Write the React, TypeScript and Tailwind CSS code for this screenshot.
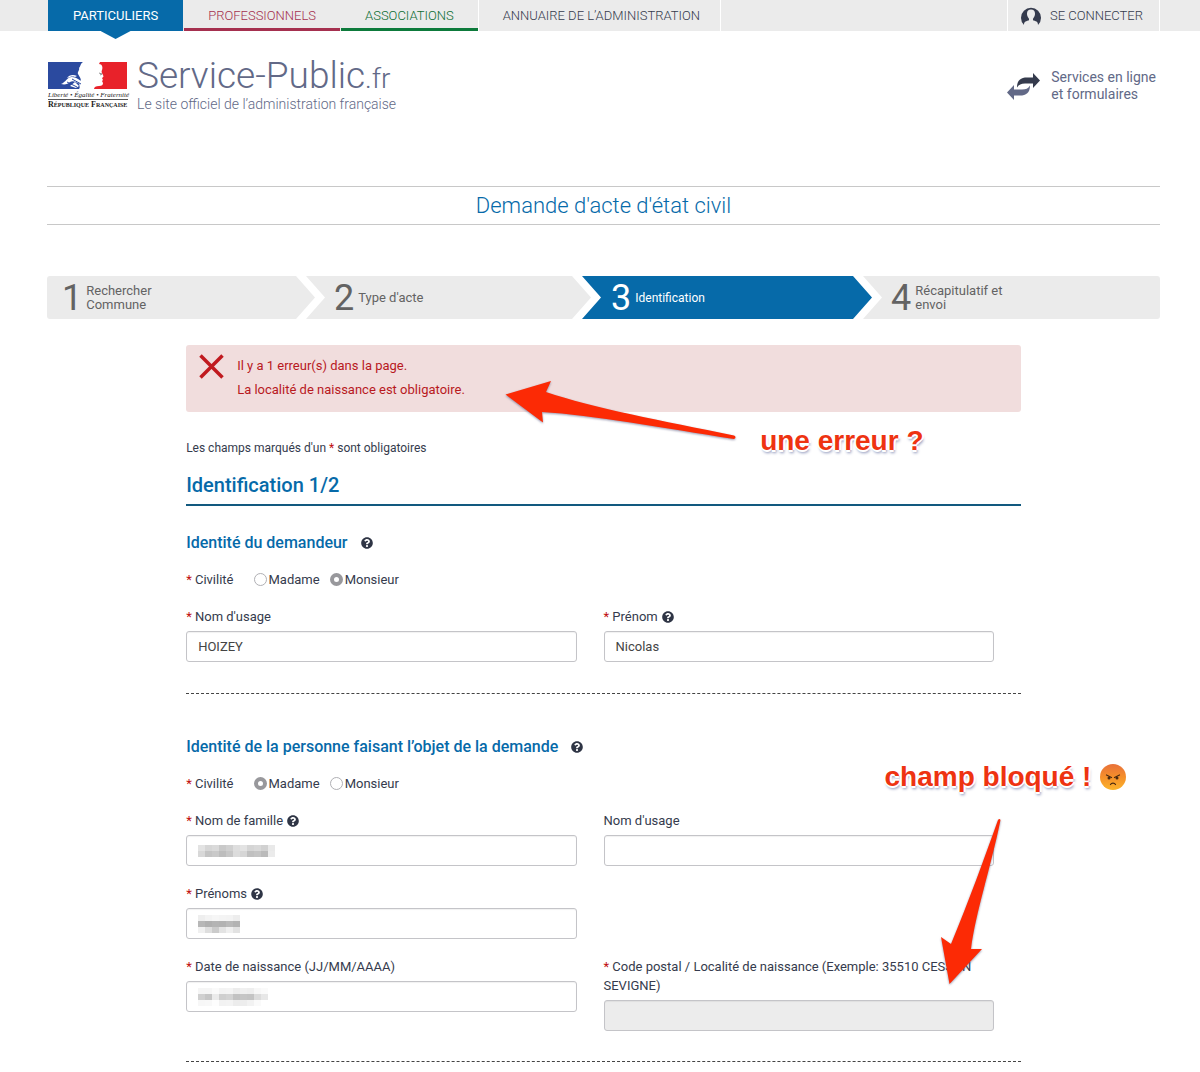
import React from 'react';
import { FaQuestionCircle } from 'react-icons/fa';

function RepublicLogo() {
  return (
    <div className="w-20 shrink-0 pt-1 font-['Liberation_Serif',serif] text-[#222]">
      <svg viewBox="0 0 79 27" className="block h-[27px] w-[79px]" aria-hidden="true">
        <path d="M0 0H35C32 2 33 4 31 6C32 8 29 10 30 12C32 16 34 17 32 20C30 23 33 25 31 27H0Z" fill="#2b4a9f" />
        <path d="M52 0H79V27H46C46 25 48 24 51 24C54 24 55 23 55 21L54 19L55 18L54 16C55 15 56 15 55 13C54 11 53 10 54 8C55 5 54 2 51 2Z" fill="#e8222a" />
        <path d="M13 22C18 20 19 15 24 15C28 15 31 18 35 20L32 22C28 20 25 18 22 20C20 22 17 23 13 22ZM19 16C21 13 25 12 29 14L27 15C24 14 22 15 19 16ZM22 24L27 20L31 24L28 26Z" fill="#fff" />
        <path d="M24 17L33 22M19 20L29 25" stroke="#2b4a9f" strokeWidth="1" />
        <path d="M51 11L54 12L52 13" stroke="#777" strokeWidth=".8" fill="none" />
      </svg>
      <p className="mt-0.5 whitespace-nowrap text-[7px] leading-2 italic">Liberté • Égalité • Fraternité</p>
      <p className="border-t border-[#555] whitespace-nowrap text-[8px] leading-[10px] font-bold [font-variant:small-caps]">République Française</p>
    </div>
  );
}

function UserIcon() {
  return (
    <svg viewBox="0 0 20 18" className="h-[18px] w-5" aria-hidden="true">
      <path d="M3 18A10 10 0 1 1 17 18C17 15 16 14.500 12.500 13.500C11.800 13.200 11.800 12 12.300 11.300C13.700 9.500 14 8 14 6.500C14 4 12.500 2.500 10 2.500S6 4 6 6.500C6 8 6.300 9.500 7.700 11.300C8.200 12 8.200 13.200 7.500 13.500C4 14.500 3 15 3 18Z" fill="#353b4d" />
    </svg>
  );
}

function SwapIcon() {
  return (
    <svg viewBox="0 0 33 27" className="h-[27px] w-[33px]" aria-hidden="true">
      <path d="M10 14.500C10 7 14 4.500 20 4.500H26V0L33 7.500L26 15V10.500H18C14 10.500 12 11.500 10 14.500Z" fill="#353b4d" />
      <path d="M23 12.500C23 20 19 22.500 13 22.500H7V27L0 19.500L7 12V16.500H15C19 16.500 21 15.500 23 12.500Z" fill="#626987" />
    </svg>
  );
}

function AngryFace() {
  return (
    <svg viewBox="0 0 28 28" className="h-7 w-7" role="img" aria-label="Visage en colère">
      <defs>
        <linearGradient id="angry" x1="0" y1="0" x2="0" y2="1">
          <stop offset="0" stopColor="#e8713a" />
          <stop offset=".5" stopColor="#f58f2a" />
          <stop offset="1" stopColor="#fbb42c" />
        </linearGradient>
      </defs>
      <circle cx="14" cy="14" r="13" fill="url(#angry)" />
      <path d="M7.500 12L12.500 14.500M20.500 12L15.500 14.500" stroke="#4b2a10" strokeWidth="1.200" strokeLinecap="round" />
      <circle cx="10" cy="15" r="1.500" fill="#4b2a10" />
      <circle cx="18" cy="15" r="1.500" fill="#4b2a10" />
      <path d="M11.500 21.500C12.500 19.800 15.500 19.800 16.500 21.500" stroke="#4b2a10" strokeWidth="1.200" fill="none" strokeLinecap="round" />
    </svg>
  );
}

function Help({ small = false }: { small?: boolean }) {
  return (
    <button type="button" aria-label="Aide" className={small ? 'ml-1 text-[#2f3545]' : 'ml-[13px] text-[#2f3545]'}>
      <FaQuestionCircle className="h-3 w-3" />
    </button>
  );
}

const Star = () => <span className="text-[#c00d0d]">* </span>;

/* Masked values: rows of grey cells, 7px wide by 6px high. */
function Mosaic({ rows }: { rows: string[][] }) {
  return (
    <div className="pointer-events-none absolute inset-y-0 left-3 flex items-center">
      <svg width="77" height={rows.length * 6} aria-hidden="true">
        {rows.map((row, y) => row.map((fill, x) => <rect key={`${x}-${y}`} x={x * 7} y={y * 6} width="7" height="6" fill={fill} />))}
      </svg>
    </div>
  );
}

const familyCells = [
  ['#e3e3e3', '#d6d6d6', '#dadada', '#c9c9c9', '#d0d0d0', '#dedede', '#e3e3e3', '#d5d5d5', '#d9d9d9', '#d1d1d1', '#e9e9e9'],
  ['#d8d8d8', '#c4c4c4', '#c9c9c9', '#bdbdbd', '#c7c7c7', '#dcdcdc', '#d6d6d6', '#c0c0c0', '#c4c4c4', '#bababa', '#ebebeb'],
];
const nameCells = [
  ['#eee', '#f3f3f3', '#f6f6f6', '#f4f4f4', '#f3f3f3', '#ededed'],
  ['#b7b7b7', '#b0b0b0', '#b4b4b4', '#b2b2b2', '#b9b9b9', '#b3b3b3'],
  ['#f0f0f0', '#dedede', '#cbcbcb', '#e3e3e3', '#efefef', '#e2e2e2'],
];
const dateCells = [
  ['#f5f5f5', '#f5f5f5', '#fafafa', '#f3f3f3', '#f4f4f4', '#ececec', '#f0f0f0', '#eee', '#f7f7f7', '#fafafa'],
  ['#d0d0d0', '#c6c6c6', '#ebebeb', '#cfcfcf', '#d3d3d3', '#c2c2c2', '#c6c6c6', '#c4c4c4', '#dcdcdc', '#e7e7e7'],
  ['#f7f7f7', '#f8f8f8', '#fdfdfd', '#f2f2f2', '#f3f3f3', '#ececec', '#ededed', '#f2f2f2', '#fafafa', '#fff'],
];

interface FieldProps {
  id: string;
  label: React.ReactNode;
  required?: boolean;
  help?: boolean;
  value?: string;
  disabled?: boolean;
  cells?: string[][];
  children?: React.ReactNode;
}

function Field({ id, label, required, help, value, disabled, cells, children }: FieldProps) {
  return (
    <div className="relative pr-[27px]">
      <div className="mb-[5px] flex items-center leading-[19px]">
        <label htmlFor={id}>
          {required && <Star />}
          {label}
        </label>
        {help && <Help small />}
      </div>
      <div className="relative">
        <input
          id={id}
          type="text"
          defaultValue={value}
          disabled={disabled}
          className="block h-[31px] w-full rounded-[3px] border border-[#c4c4c8] bg-white px-[11px] text-[13px] text-[#444] shadow-[inset_0_1px_1px_rgba(0,0,0,0.06)] disabled:bg-[#ececec]"
        />
        {cells && <Mosaic rows={cells} />}
      </div>
      {children}
    </div>
  );
}

function Civility({ name, selected }: { name: string; selected: string }) {
  return (
    <fieldset className="mt-4 flex items-center leading-[19px]">
      <legend className="float-left mr-5">
        <Star />
        Civilité
      </legend>
      {['Madame', 'Monsieur'].map((option) => (
        <label key={option} className="mr-[10px] flex items-center gap-0.5">
          <input
            type="radio"
            name={name}
            defaultChecked={option === selected}
            className="h-[13px] w-[13px] appearance-none rounded-full border border-[#b0b0b4] bg-white checked:border-[4px] checked:border-[#98989c]"
          />
          {option}
        </label>
      ))}
    </fieldset>
  );
}

const sticker =
  'absolute whitespace-nowrap font-["Liberation_Sans",sans-serif] text-[28px] leading-8 font-bold text-[#ee3311] [text-shadow:-2px_0_#fff,2px_0_#fff,0_-2px_#fff,0_2px_#fff,1px_3px_3px_#8a93b8]';

const steps = [
  { label: 'Rechercher Commune' },
  { label: "Type d'acte" },
  { label: 'Identification' },
  { label: 'Récapitulatif et envoi' },
];
const stepShapes = [
  'mr-[10px] rounded-l-[3px] pl-[15px] bg-[#ebebeb] text-[#636363] [clip-path:polygon(0_0,calc(100%-19px)_0,100%_50%,calc(100%-19px)_100%,0_100%)]',
  '-ml-[19px] mr-[10px] pl-7 bg-[#ebebeb] text-[#636363] [clip-path:polygon(0_0,calc(100%-19px)_0,100%_50%,calc(100%-19px)_100%,0_100%,19px_50%)]',
  '-ml-[19px] mr-[10px] pl-[29px] bg-[#066aa9] text-xs text-white [clip-path:polygon(0_0,calc(100%-19px)_0,100%_50%,calc(100%-19px)_100%,0_100%,19px_50%)]',
  '-ml-[19px] rounded-r-[3px] pl-7 bg-[#ebebeb] text-[#636363] [clip-path:polygon(0_0,100%_0,100%_100%,0_100%,19px_50%)]',
];

export default function App() {
  return (
    <div className="overflow-x-hidden bg-white font-[Roboto,sans-serif] text-[13px] text-[#353b4d]">
      <header>
        <div className="bg-[#ebebeb] pr-10 pl-12">
          <nav className="flex h-[31px] items-stretch text-[13px] leading-[31px]">
            <a href="#particuliers" className="relative mr-px bg-[#066aa9] px-[25px] text-white">
              PARTICULIERS
              <span className="absolute top-full left-1/2 h-2 w-[30px] -translate-x-1/2 bg-[#066aa9] [clip-path:polygon(0_0,100%_0,50%_100%)]" />
            </a>
            <a href="#professionnels" className="mr-px border-b-[3px] border-[#a5304f] px-6 font-light text-[#a5304f]">PROFESSIONNELS</a>
            <a href="#associations" className="border-b-[3px] border-[#0d7a3b] px-6 font-light text-[#0d6e33]">ASSOCIATIONS</a>
            <a href="#annuaire" className="border-x border-white pr-5 pl-6 font-light">ANNUAIRE DE L’ADMINISTRATION</a>
            <a href="#connexion" className="ml-auto flex items-center gap-[9px] border-x border-white pr-4 pl-[13px] font-light">
              <UserIcon />
              SE CONNECTER
            </a>
          </nav>
        </div>
        <div className="flex items-start justify-between pt-[27px] pr-11 pl-12">
          <a href="#accueil" className="flex gap-[9px]">
            <RepublicLogo />
            <div className="pt-px text-[#626987]">
              <p className="text-[37px] leading-[34px] font-light">
                Service-Public<span className="text-[28px]">.fr</span>
              </p>
              <p className="text-sm leading-4 font-light">Le site officiel de l’administration française</p>
            </div>
          </a>
          <a href="#services" className="flex items-center gap-[11px] pt-[11px] text-sm leading-[17px] text-[#626987]">
            <SwapIcon />
            <span>
              Services en ligne
              <br />
              et formulaires
            </span>
          </a>
        </div>
      </header>

      <main className="mt-[74px] pr-10 pb-3 pl-[47px]">
        <h1 className="border-y border-[#c8c8c8] text-center text-[22px] leading-[37px] font-light text-[#066aa9]">Demande d'acte d'état civil</h1>

        <ol className="mt-[51px] grid grid-cols-[278fr_276fr_281fr_278fr]">
          {steps.map((step, i) => (
            <li key={step.label} aria-current={i === 2 ? 'step' : undefined} className={`flex h-[43px] items-center gap-1 ${stepShapes[i]}`}>
              <span className="text-4xl leading-10">{i + 1}</span>
              <span className="w-24 leading-[14px]">{step.label}</span>
            </li>
          ))}
        </ol>

        <form className="mx-auto mt-[26px] w-3/4">
          <div role="alert" className="relative flex gap-[13px] rounded-[3px] bg-[#f1dddd] pt-[9px] pr-3 pb-[10px] pl-[13px] leading-6 text-[#b8191e]">
            <svg viewBox="0 0 25 25" className="h-[25px] w-[25px]" aria-hidden="true">
              <path d="M1.500 1.500L23.500 23.500M23.500 1.500L1.500 23.500" stroke="#c01a1f" strokeWidth="3.500" />
            </svg>
            <div>
              <p>Il y a 1 erreur(s) dans la page.</p>
              <p>La localité de naissance est obligatoire.</p>
            </div>
            <svg viewBox="0 0 234 66" className="absolute top-[34px] left-[317px] h-[66px] w-[234px] drop-shadow-[0_1px_1px_rgba(80,80,120,0.6)]" aria-hidden="true">
              <path d="M2.500 15.500L48 2L43 13C90 29 160 42 231 56.500Q234 58 231 60C160 49 90 36 39 33L40 43.500Z" fill="#fc2a05" />
            </svg>
            <p className={`${sticker} top-20 left-[574px]`}>une erreur ?</p>
          </div>

          <p className="mt-[27px] text-xs leading-[18px]">
            Les champs marqués d'un <Star />
            sont obligatoires
          </p>
          <h2 className="mt-[13px] border-b-2 border-[#12597f] pb-1 text-xl leading-[30px] font-medium text-[#066aa9]">Identification 1/2</h2>

          <section className="border-b border-dashed border-[#444] pb-[31px]">
            <div className="mt-[26px] flex items-center">
              <h3 className="text-base leading-[22px] font-medium text-[#066aa9]">Identité du demandeur</h3>
              <Help />
            </div>
            <Civility name="demandeur" selected="Monsieur" />
            <div className="mt-[18px] grid grid-cols-2">
              <Field id="nom" label="Nom d'usage" required value="HOIZEY" />
              <Field id="prenom" label="Prénom" required help value="Nicolas" />
            </div>
          </section>

          <section className="border-b border-dashed border-[#444] pb-[30px]">
            <div className="mt-[42px] flex items-center">
              <h3 className="text-base leading-[22px] font-medium text-[#066aa9]">Identité de la personne faisant l’objet de la demande</h3>
              <Help />
            </div>
            <Civility name="personne" selected="Madame" />
            <div className="mt-[18px] grid grid-cols-2 gap-y-[18px]">
              <Field id="famille" label="Nom de famille" required help cells={familyCells} />
              <Field id="usage" label="Nom d'usage" />
              <Field id="prenoms" label="Prénoms" required help cells={nameCells} />
              <div />
              <Field id="naissance" label="Date de naissance (JJ/MM/AAAA)" required cells={dateCells} />
              <Field
                id="localite"
                label={
                  <>
                    Code postal / Localité de naissance (Exemple: 35510 CESSON
                    <br />
                    SEVIGNE)
                  </>
                }
                required
                disabled
              >
                <svg viewBox="0 0 64 172" className="absolute right-[18px] bottom-[43px] h-[172px] w-16 drop-shadow-[0_1px_1px_rgba(80,80,120,0.6)]" aria-hidden="true">
                  <path d="M10.500 168L2 121L12 128C30 85 46 40 59 4Q60.500 2 61.500 4C51 55 37 95 32 133L43 133Z" fill="#fc2a05" />
                </svg>
                <div className={`${sticker} bottom-[238px] left-[281px] flex items-center gap-2`}>
                  champ bloqué !<AngryFace />
                </div>
              </Field>
            </div>
          </section>
        </form>
      </main>
    </div>
  );
}
